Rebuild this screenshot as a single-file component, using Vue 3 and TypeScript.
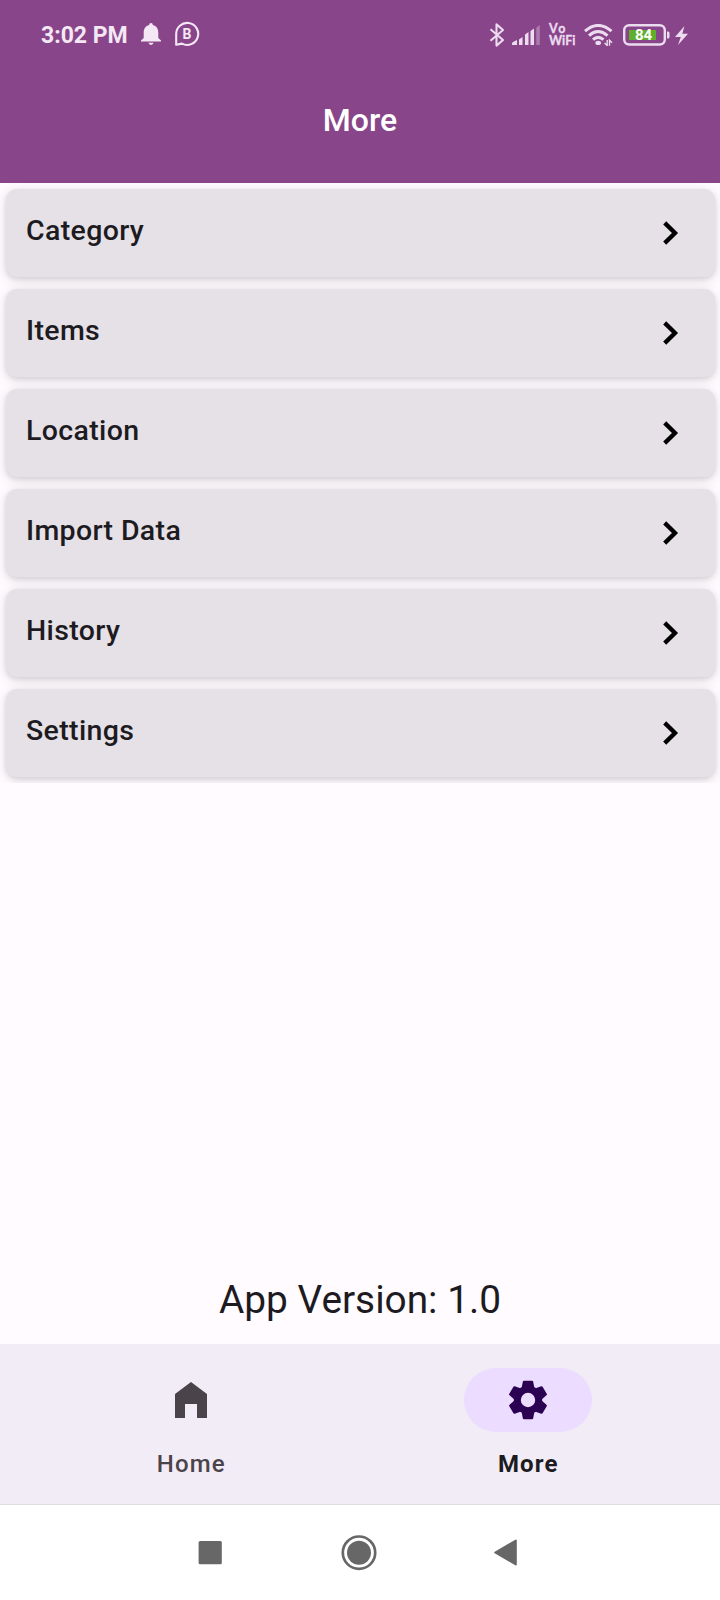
<script setup lang="ts">
const rows: string[] = ['Category', 'Items', 'Location', 'Import Data', 'History', 'Settings']
</script>

<template>
  <div class="screen">
    <header class="header">
      <div class="status">
        <div class="status-left">
          <span class="clock">3:02 PM</span>
          <svg class="bell" width="20" height="22" viewBox="0 0 20 22">
            <path d="M10 0c1.200 0 1.800.8 1.800 2C15.500 2.800 17.300 6 17.300 9.500V15L20 17.400V18.500H0V17.400L2.700 15V9.500C2.700 6 4.500 2.800 8.200 2 8.200.8 8.800 0 10 0ZM7.600 19.700h4.800c-.3 1.300-1.200 2.100-2.400 2.100s-2.100-.8-2.400-2.100Z" fill="#f3e8f4" />
          </svg>
          <svg class="chat" width="26" height="26" viewBox="0 0 26 26">
            <path d="M2.200 23.800V13.200A11 11 0 1 1 8 22.600Z" fill="none" stroke="#f3e8f4" stroke-width="2.100" stroke-linejoin="round" />
            <text x="12.900" y="17.800" text-anchor="middle" class="chat-letter">B</text>
          </svg>
        </div>
        <div class="status-right">
          <svg class="bluetooth" width="16" height="24" viewBox="0 0 16 24">
            <path d="M1.500 6.200 14 17 7.500 22.600V1.400L14 7 1.500 17.800" fill="none" stroke="#ecdcf0" stroke-width="2.100" stroke-linejoin="round" />
          </svg>
          <svg class="signal" width="28" height="20" viewBox="0 0 28 20" fill="#ecdcf0">
            <path d="M0 20V18.500Q0 17.500 1 17L5 15V20ZM7 14.500 10.500 12V20H7ZM13 9.500 16.500 7V20H13ZM18.500 6 22 3.500V20H18.500Z" />
            <path d="M24.300 2.500 27.800 0V20H24.300Z" opacity=".35" />
          </svg>
          <span class="vowifi"><span>Vo</span><span>WiFi</span></span>
          <svg class="wifi" width="29" height="22" viewBox="0 0 29 22">
            <g fill="none" stroke="#ecdcf0" stroke-width="3">
              <path d="M1 7.200Q14 -4.300 27.500 7.200" />
              <path d="M5 11.600Q14 3.500 23.500 11.600" />
              <path d="M9 15.700Q14 11 19.500 15.700" />
            </g>
            <ellipse cx="14.200" cy="18.900" rx="2.800" ry="2.100" fill="#ecdcf0" />
            <path d="M23.200 16V21.500L20.500 19M25.500 21.800V16.300L28 18.800" fill="none" stroke="#ecdcf0" stroke-width="1.400" />
          </svg>
          <svg class="battery" width="47" height="22" viewBox="0 0 47 22">
            <rect x="1.200" y="1.200" width="40.600" height="19.300" rx="5" fill="none" stroke="#ecdcf0" stroke-width="2.400" />
            <rect x="6" y="6" width="27" height="10" fill="#5fae2c" />
            <path d="M44 7.500h1q1.500 0 1.500 1.500v4q0 1.500-1.500 1.500h-1Z" fill="#ecdcf0" />
            <text x="20.500" y="16.300" text-anchor="middle" class="battery-level">84</text>
          </svg>
          <svg class="bolt" width="14" height="19" viewBox="0 0 14 19">
            <path d="M9.500 0 0 11H5.800L3 19 13 7.700H7.300Z" fill="#ecdcf0" />
          </svg>
        </div>
      </div>
      <h1 class="title">More</h1>
    </header>

    <main class="content">
      <ul class="list">
        <li v-for="row in rows" :key="row" class="card">
          <span class="label">{{ row }}</span>
          <svg class="chevron" width="16" height="24" viewBox="0 0 16 24">
            <path d="M1.700 1.900 12 12 1.700 22.100" fill="none" stroke="#000" stroke-width="4.300" />
          </svg>
        </li>
      </ul>
      <p class="version">App Version: 1.0</p>
    </main>

    <nav class="tabs">
      <div class="tab">
        <span class="pill">
          <svg width="32" height="36" viewBox="0 0 32 36">
            <path d="M16 0 32 12V36H22V22H10V36H0V12Z" fill="#4b434a" />
          </svg>
        </span>
        <span class="tab-label">Home</span>
      </div>
      <div class="tab active">
        <span class="pill">
          <svg width="38" height="40" viewBox="-19 -20 38 40">
            <g fill="#2b0052">
              <path v-for="angle in [0, 60, 120, 180, 240, 300]" :key="angle" :transform="`rotate(${angle})`" d="M-6.600 -11 -5.200 -18.300Q-5 -19.300 -4 -19.300H4Q5 -19.300 5.200 -18.300L6.600 -11Z" />
              <path fill-rule="evenodd" d="M-14.200 0A14.200 14.200 0 1 1 14.200 0 14.200 14.200 0 1 1-14.200 0ZM-7.200 0A7.200 7.200 0 1 0 7.200 0 7.200 7.200 0 1 0-7.200 0Z" />
            </g>
          </svg>
        </span>
        <span class="tab-label">More</span>
      </div>
    </nav>

    <footer class="system">
      <svg width="24" height="24" viewBox="0 0 24 24">
        <rect x=".6" y="0" width="23.200" height="23.200" rx="1.500" fill="#676767" />
      </svg>
      <svg class="home-button" width="36" height="36" viewBox="0 0 36 36">
        <circle cx="18" cy="17.700" r="16.200" fill="none" stroke="#676767" stroke-width="2.700" />
        <circle cx="18" cy="17.700" r="12" fill="#676767" />
      </svg>
      <svg width="23" height="27" viewBox="0 0 23 27">
        <path d="M1.200 13.500 21.800 1.500V25.500Z" fill="#676767" stroke="#676767" stroke-width="2" stroke-linejoin="round" />
      </svg>
    </footer>
  </div>
</template>

<style>
body {
  margin: 0;
}
</style>

<style scoped>
.screen {
  display: flex;
  flex-direction: column;
  width: 720px;
  height: 1600px;
  overflow: hidden;
  background: #fffbff;
  color: #1d1b1f;
  font-family: Roboto, sans-serif;
}
svg {
  display: block;
  flex: none;
}
.header {
  height: 183px;
  flex: none;
  background: #894589;
}
.status {
  display: flex;
  justify-content: space-between;
  height: 70px;
  padding: 0 31px 0 41px;
  box-sizing: border-box;
}
.status-left,
.status-right {
  display: flex;
  align-items: center;
}
.clock {
  width: 86px;
  padding-top: 1px;
  color: #f3e8f4;
  font-size: 23px;
  font-weight: 700;
  line-height: 28px;
  white-space: nowrap;
}
.bell {
  margin: 0 0 2px 14px;
}
.chat {
  margin: 0 0 2px 13px;
}
.chat-letter {
  fill: #f3e8f4;
  font-size: 14px;
  font-weight: 700;
}
.bluetooth {
  margin-right: 7px;
}
.signal {
  margin-right: 9px;
}
.vowifi {
  display: flex;
  flex-direction: column;
  width: 26px;
  margin-right: 9px;
  color: #ecdcf0;
  font-family: Lato, sans-serif;
  font-size: 12.500px;
  font-weight: 700;
  line-height: 12px;
}
.vowifi span {
  -webkit-text-stroke: 0.300px #ecdcf0;
}
.vowifi span:first-child {
  letter-spacing: 1.500px;
}
.wifi {
  margin-right: 10px;
}
.battery {
  margin-right: 5px;
}
.battery-level {
  fill: #fff;
  font-size: 15px;
  font-weight: 700;
}
.title {
  margin: 31px 0 0;
  font-size: 32px;
  font-weight: 500;
  line-height: 39px;
  color: #fff;
  text-align: center;
}
.content {
  display: flex;
  flex: 1;
  flex-direction: column;
  justify-content: space-between;
}
.list {
  display: flex;
  flex-direction: column;
  gap: 12px;
  margin: 0;
  padding: 6px 5.500px;
  overflow: hidden;
  list-style: none;
}
.card {
  display: flex;
  justify-content: space-between;
  height: 88px;
  padding: 0 35.500px 0 20.500px;
  box-sizing: border-box;
  border-radius: 11px;
  background: #e5e1e7;
  box-shadow: 0 2px 5px rgba(0, 0, 0, 0.1), 0 3px 14px rgba(0, 0, 0, 0.12);
}
.label {
  padding-top: 25px;
  font-size: 28.500px;
  font-weight: 500;
  line-height: 34px;
  letter-spacing: 0.350px;
}
.chevron {
  margin-top: 32px;
}
.version {
  margin: 0 0 20px;
  font-size: 38.800px;
  line-height: 48px;
  text-align: center;
}
.tabs {
  display: flex;
  justify-content: space-around;
  flex: none;
  height: 160px;
  padding: 0 23px 0 22px;
  box-sizing: border-box;
  background: #f2ecf6;
}
.tab {
  display: flex;
  flex-direction: column;
  align-items: center;
  width: 337px;
  padding-top: 24px;
  color: #4b434a;
}
.pill {
  display: flex;
  align-items: center;
  justify-content: center;
  width: 128px;
  height: 64px;
  border-radius: 32px;
}
.active .pill {
  background: #ecdcff;
}
.tab-label {
  margin-top: 17px;
  padding-left: 1px;
  font-size: 24px;
  font-weight: 500;
  line-height: 30px;
  letter-spacing: 1.100px;
}
.active .tab-label {
  padding-left: 0;
  color: #1d1b1f;
  font-weight: 700;
}
.system {
  display: flex;
  align-items: center;
  justify-content: space-between;
  flex: none;
  height: 96px;
  padding: 0 203px 0 198px;
  box-sizing: border-box;
  border-top: 1px solid #dfdde1;
  background: #fff;
}
.home-button {
  margin-left: 2px;
}
</style>
